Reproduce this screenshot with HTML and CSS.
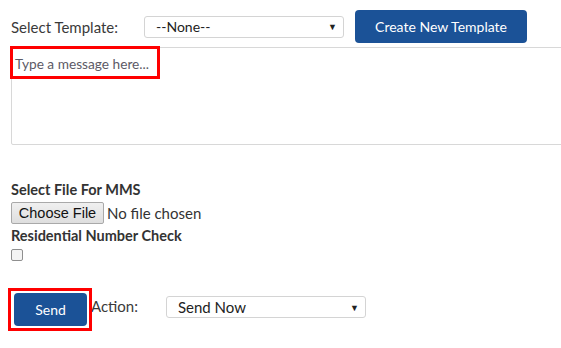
FILE: index.html
```html
<!DOCTYPE html>
<html>
<head>
<meta charset="utf-8">
<link rel="stylesheet" href="styles.css">
</head>
<body>
<div class="page">
  <div class="template-row">
    <label class="label">Select Template:</label>
    <div class="select sel-template"><span>--None--</span><span class="arrow">&#9660;</span></div>
    <button class="btn btn-create">Create New Template</button>
  </div>
  <div class="msg-wrap">
    <div class="textarea"><span class="placeholder">Type a message here...</span></div>
    <div class="mark mark-msg"></div>
  </div>
  <div class="file-section">
    <div class="heading">Select File For MMS</div>
    <div class="file-row"><span class="file-btn">Choose File</span><span class="file-text">No file chosen</span></div>
    <div class="heading">Residential Number Check</div>
    <div class="check"></div>
  </div>
  <div class="send-row">
    <div class="send-wrap">
      <button class="btn btn-send">Send</button>
      <div class="mark mark-send"></div>
    </div>
    <span class="label action-label">Action:</span>
    <div class="select sel-action"><span>Send Now</span><span class="arrow">&#9660;</span></div>
  </div>
</div>
</body>
</html>
```
FILE: styles.css
```css
html, body { margin: 0; padding: 0; background: #fff; overflow: hidden; }
body { width: 561px; height: 348px; font-family: Lato, "Open Sans", sans-serif; color: #333; }
.page { padding: 10px 0 0 11px; }
.template-row { display: flex; align-items: center; height: 33px; }
.label { font-size: 15px; color: #3a3a3a; }
.select { box-sizing: border-box; height: 22px; border: 1px solid #d4d4d4; border-radius: 3px; display: flex; align-items: center; justify-content: space-between; padding: 0 6px 0 11px; font-size: 14px; color: #222; background: #fff; }
.select .arrow { font-size: 9px; color: #222; }
.sel-template { width: 200px; margin-left: 26px; }
.btn { border: none; background: #1b5297; color: #fff; font-family: Lato, sans-serif; font-size: 14px; border-radius: 4px; cursor: pointer; }
.btn-create { width: 172px; height: 33px; margin-left: 11px; }
.msg-wrap { position: relative; margin-top: 4px; }
.textarea { box-sizing: border-box; width: 620px; height: 98px; border: 1px solid #d8d8d8; border-radius: 2px; padding: 5px 3px; }
.placeholder { font-size: 13.7px; color: #5c5a66; }
.mark { position: absolute; border: 3px solid #f00; box-sizing: border-box; }
.mark-msg { left: -1px; top: -1px; width: 150px; height: 33px; }
.file-section { margin-top: 36px; }
.heading { font-size: 14.5px; font-weight: bold; color: #333; line-height: 17px; }
.file-row { display: flex; align-items: center; margin: 4px 0 3px; }
.file-btn { box-sizing: border-box; display: inline-block; height: 22px; width: 93px; border: 1px solid #a9a9a9; border-radius: 2px; background: linear-gradient(#f0f0f0, #dedede); font-family: "Liberation Sans", Arial, sans-serif; font-size: 14.5px; color: #111; text-align: center; line-height: 20px; }
.file-text { font-size: 15px; margin-left: 3px; color: #333; }
.check { box-sizing: border-box; width: 12px; height: 12px; border: 1px solid #8f8f8f; border-radius: 2px; margin-top: 5px; background: #f4f4f4; }
.send-row { display: flex; align-items: flex-start; margin-top: 27px; margin-left: -3px; }
.send-wrap { position: relative; padding: 5px 5px 5px 6px; }
.btn-send { width: 73px; height: 33px; display: block; }
.mark-send { left: 0; top: 0; right: 0; bottom: 0; }
.action-label { margin-left: -1px; margin-top: 9px; line-height: 18px; }
.sel-action { width: 200px; margin-left: 28px; margin-top: 8px; font-size: 15px; }
```
